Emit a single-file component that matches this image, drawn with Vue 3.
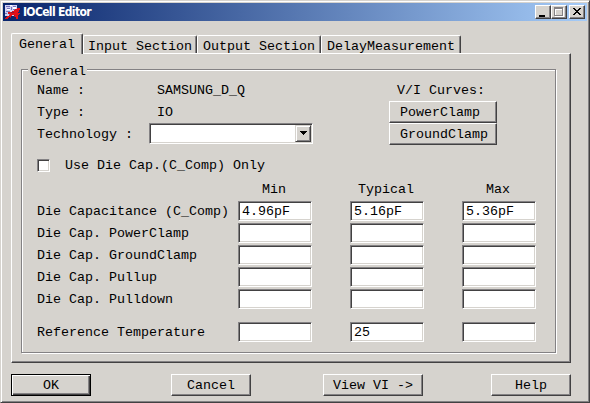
<script setup>
import { ref } from 'vue'

const tabs = ['General', 'Input Section', 'Output Section', 'DelayMeasurement']
const active = ref('General')
const useDieCap = ref(false)
const columns = ['Min', 'Typical', 'Max']
const rows = ref([
  { label: 'Die Capacitance (C_Comp)', values: ['4.96pF', '5.16pF', '5.36pF'] },
  { label: 'Die Cap. PowerClamp', values: ['', '', ''] },
  { label: 'Die Cap. GroundClamp', values: ['', '', ''] },
  { label: 'Die Cap. Pullup', values: ['', '', ''] },
  { label: 'Die Cap. Pulldown', values: ['', '', ''] },
  { label: 'Reference Temperature', values: ['', '25', ''], spaced: true },
])
</script>

<template>
  <div class="window">
    <header class="titlebar">
      <svg class="app-icon" width="16" height="16" viewBox="0 0 16 16" shape-rendering="crispEdges">
        <path d="M0 1h12v10h-1v1h-11z" fill="#d4d2f4" />
        <path d="M1 2h4v1h-4zM6 3h1v3h-1zM8 2h3v1h-3zM2 4h3v1h-3zM1 7h4v1h-4zM8 5h2v1h-2zM0 9h2v1h-2zM4 9h2v2h-2z" fill="#7474bc" />
        <path d="M5 1h2v1h-2zM8 3h3v2h-3zM2 5h3v1h-3z" fill="#fff" />
        <path d="M12 4h3v2h-1v2h-1v1h2v1h-1v1h-1v4h-2v-2h-1v-2h-3v1h-1v1h-2v1h-1v1h-3v-1h1v-1h1v-1h2v-1h1v-1h-2v-2h4v-1h2v-1h1v-1h1z" fill="#e01018" />
        <path d="M6 8h3v1h-3zM9 11h1v2h-1zM5 13h1v1h-1z" fill="#8c1830" />
      </svg>
      <span class="title">IOCell Editor</span>
      <span class="win-btn">
        <svg width="12" height="10" shape-rendering="crispEdges"><path d="M2 8h6v2h-6z" /></svg>
      </span>
      <span class="win-btn">
        <svg width="12" height="10" shape-rendering="crispEdges">
          <path d="M2 1h9v9h-9zM3 3v6h7v-6z" fill="#fff" fill-rule="evenodd" />
          <path d="M1 0h9v9h-9zM2 2v6h7v-6z" fill="#848284" fill-rule="evenodd" />
        </svg>
      </span>
      <span class="win-btn close">
        <svg width="12" height="10" shape-rendering="crispEdges">
          <path d="M2 1h2v1h1v1h2v-1h1v-1h2v1h-1v1h-1v1h-1v1h1v1h1v1h1v1h-2v-1h-1v-1h-2v1h-1v1h-2v-1h1v-1h1v-1h1v-1h-1v-1h-1v-1h-1z" />
        </svg>
      </span>
    </header>

    <nav class="tabs">
      <button v-for="t in tabs" :key="t" class="tab" :class="{ active: t === active }" @click="active = t">{{ t }}</button>
    </nav>

    <main class="panel">
      <section class="group">
        <h2 class="legend">General</h2>
        <div class="top">
          <div class="props">
            <span>Name :</span><span class="value">SAMSUNG_D_Q</span>
            <span>Type :</span><span class="value">IO</span>
            <span>Technology :</span>
            <div class="combo">
              <span class="drop">
                <svg width="13" height="13" shape-rendering="crispEdges"><path d="M3 4h7v1h-1v1h-1v1h-1v1h-1v-1h-1v-1h-1v-1h-1z" /></svg>
              </span>
            </div>
          </div>
          <div class="curves">
            <span class="curves-label">V/I Curves:</span>
            <button class="btn">PowerClamp</button>
            <button class="btn">GroundClamp</button>
          </div>
        </div>
        <label class="check">
          <input v-model="useDieCap" type="checkbox" class="box" />
          <span>Use Die Cap.(C_Comp) Only</span>
        </label>
        <div class="grid head">
          <span></span>
          <span v-for="c in columns" :key="c" class="col">{{ c }}</span>
        </div>
        <div v-for="r in rows" :key="r.label" class="grid row" :class="{ spaced: r.spaced }">
          <span>{{ r.label }}</span>
          <input v-for="(v, i) in r.values" :key="i" v-model="r.values[i]" class="field" />
        </div>
      </section>
    </main>

    <footer class="actions">
      <button class="btn default">OK</button>
      <button class="btn cancel">Cancel</button>
      <button class="btn wide">View VI -&gt;</button>
      <button class="btn help">Help</button>
    </footer>
  </div>
</template>

<style>
body { margin: 0; background: #d6d3ce; overflow: hidden; }
</style>

<style scoped>
* { box-sizing: border-box; }
.window {
  width: 590px;
  height: 403px;
  display: flex;
  flex-direction: column;
  background: #d6d3ce;
  border: 1px solid;
  border-color: #d6d3ce #424142 #424142 #d6d3ce;
  box-shadow: inset 1px 1px #fff, inset -1px -1px #848284;
  padding: 2px;
  font: 13.333px/16px "Liberation Mono", "Courier New", monospace;
  color: #000;
}
button, input { font: inherit; color: inherit; margin: 0; border-radius: 0; outline: 0; }
.titlebar {
  flex: none;
  height: 18px;
  display: flex;
  align-items: center;
  padding: 0 2px;
  background: linear-gradient(90deg, #08246b, #a5cbf7);
}
.app-icon { flex: none; }
.title {
  flex: 1;
  padding-left: 2px;
  color: #fff;
  font: bold 12px/18px Tahoma, "DejaVu Sans Condensed", "DejaVu Sans", sans-serif;
  font-stretch: condensed;
  letter-spacing: -0.65px;
}
.win-btn {
  width: 16px;
  height: 14px;
  padding: 1px;
  background: #d6d3ce;
  border: 1px solid;
  border-color: #fff #424142 #424142 #fff;
  box-shadow: inset -1px -1px #848284;
}
.win-btn svg { display: block; }
.close { margin-left: 2px; }
.tabs { flex: none; height: 32px; padding: 12px 0 0 8px; display: flex; align-items: flex-end; }
.tab {
  height: 18px;
  padding: 0 6px 0 4px;
  line-height: 21px;
  text-align: left;
  background: #d6d3ce;
  border: 1px solid;
  border-color: #fff #424142 transparent #fff;
  border-bottom: 0;
  border-radius: 2px 2px 0 0;
  box-shadow: inset -1px 0 #848284;
  white-space: nowrap;
}
.tab:nth-child(2) { width: 114px; }
.tab:nth-child(3) { width: 124px; padding-left: 5px; }
.tab:nth-child(4) { width: 140px; padding-left: 5px; }
.tab.active {
  width: 72px;
  height: 21px;
  margin-bottom: -1px;
  padding: 1px 0 0 7px;
  line-height: 19px;
  z-index: 1;
}
.panel {
  flex: none;
  width: 560px;
  height: 310px;
  margin-left: 8px;
  padding: 15px 13px 8px 9px;
  border: 1px solid;
  border-color: #fff #424142 #424142 #fff;
  box-shadow: inset -1px -1px #848284;
}
.group {
  width: 535px;
  height: 284px;
  padding: 0 0 0 15px;
  border: 1px solid #848284;
  box-shadow: 1px 1px #fff, inset 1px 1px #fff;
}
.legend {
  width: 59px;
  height: 16px;
  margin: -7px 0 0 -9px;
  padding-left: 2px;
  font: inherit;
  line-height: 18px;
  background: #d6d3ce;
}
.top { display: flex; justify-content: space-between; width: 460px; height: 66px; }
.props {
  display: grid;
  grid-template-columns: 112px 164px;
  grid-template-rows: 22px 22px 22px;
  align-items: center;
}
.props > span { padding-top: 2px; }
.value { padding-left: 8px; }
.combo {
  height: 21px;
  padding: 1px;
  align-self: start;
  display: flex;
  justify-content: flex-end;
  background: #fff;
  border: 1px solid;
  border-color: #848284 #fff #fff #848284;
  box-shadow: inset 1px 1px #424142, inset -1px -1px #d6d3ce;
}
.drop {
  width: 16px;
  height: 17px;
  padding: 1px;
  background: #d6d3ce;
  border: 1px solid;
  border-color: #d6d3ce #424142 #424142 #d6d3ce;
  box-shadow: inset 1px 1px #fff, inset -1px -1px #848284;
}
.drop svg { display: block; }
.curves { width: 108px; display: flex; flex-direction: column; }
.curves-label { height: 22px; line-height: 24px; padding-left: 8px; }
.btn {
  display: block;
  height: 22px;
  padding: 2px 0 0;
  text-align: center;
  line-height: 18px;
  background: #d6d3ce;
  border: 1px solid;
  border-color: #fff #424142 #424142 #fff;
  box-shadow: inset -1px -1px #848284;
}
.curves .btn { flex: none; padding-left: 10px; text-align: left; }
.check { display: flex; align-items: flex-start; height: 18px; margin-top: 11px; gap: 15px; }
.check span { line-height: 20px; }
.box {
  appearance: none;
  width: 13px;
  height: 13px;
  margin-top: 3px;
  background: #fff;
  border: 1px solid;
  border-color: #848284 #fff #fff #848284;
  box-shadow: inset 1px 1px #424142, inset -1px -1px #d6d3ce;
}
.grid { display: grid; grid-template-columns: 201px 112px 112px 74px; }
.head { height: 16px; margin: 7px 0 4px; line-height: 18px; }
.row { height: 20px; margin-bottom: 2px; line-height: 21px; }
.row span { white-space: nowrap; }
.col { width: 74px; text-align: center; padding-right: 2px; }
.field {
  width: 74px;
  height: 20px;
  padding: 0 3px;
  line-height: 16px;
  background: #fff;
  border: 1px solid;
  border-color: #848284 #fff #fff #848284;
  box-shadow: inset 1px 1px #424142, inset -1px -1px #d6d3ce;
}
.spaced { margin-top: 13px; }
.actions { padding: 11px 0 0 8px; display: flex; }
.actions .btn { width: 80px; }
.actions .cancel { margin-left: 80px; }
.actions .wide { width: 100px; margin-left: 72px; }
.actions .help { margin-left: 68px; }
.actions .default {
  border-color: #000;
  box-shadow: inset 1px 1px #fff, inset -1px -1px #424142, inset -2px -2px #848284;
}
</style>
